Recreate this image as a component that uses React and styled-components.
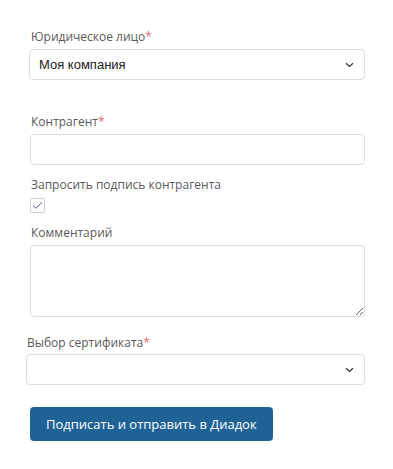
import React from 'react';
import styled, { createGlobalStyle } from 'styled-components';

const GlobalStyle = createGlobalStyle`
  html, body {
    margin: 0;
    padding: 0;
    background: #fff;
  }
  body {
    font-family: 'Open Sans', 'Liberation Sans', sans-serif;
  }
`;

const Form = styled.form`
  width: 393px;
  box-sizing: border-box;
  padding: 28px 28px 0 0;
  display: flex;
  flex-direction: column;
`;

const Field = styled.div`
  display: flex;
  flex-direction: column;
  padding-left: ${(p) => p.$inset || 30}px;
  margin-top: ${(p) => p.$top || 0}px;
`;

const Label = styled.label`
  font-size: 12px;
  line-height: 17px;
  color: #5a5a5a;
  margin-bottom: ${(p) => (p.$gap !== undefined ? p.$gap : 4)}px;
  padding-left: ${(p) => p.$shift || 1}px;

  em {
    font-style: normal;
    color: #e06767;
  }
`;

const Select = styled.div`
  height: 31px;
  box-sizing: border-box;
  border: 1px solid #dcdcdc;
  border-radius: 4px;
  background: #fff;
  display: flex;
  align-items: center;
  justify-content: space-between;
  padding: 0 10px 0 9px;
  font-family: 'Liberation Sans', Arial, sans-serif;
  font-size: 13px;
  color: #222;
`;

const Input = styled.input`
  height: 31px;
  box-sizing: border-box;
  border: 1px solid #dcdcdc;
  border-radius: 4px;
  outline: none;
  padding: 0 9px;
  font-family: 'Liberation Sans', Arial, sans-serif;
  font-size: 13px;
`;

const TextArea = styled.textarea`
  height: 72px;
  box-sizing: border-box;
  border: 1px solid #dcdcdc;
  border-radius: 4px;
  outline: none;
  padding: 6px 9px;
  font-family: 'Liberation Sans', Arial, sans-serif;
  font-size: 13px;
  resize: vertical;
`;

const Check = styled.span`
  width: 15px;
  height: 15px;
  box-sizing: border-box;
  border: 1px solid #cfcfcf;
  border-radius: 2px;
  display: flex;
  align-items: center;
  justify-content: center;
  background: #fff;
`;

const Button = styled.button`
  align-self: flex-start;
  margin: 22px 0 0 30px;
  height: 34px;
  padding: 0 16px;
  border: none;
  border-radius: 4px;
  background: #1f6396;
  color: #fff;
  font-family: 'Open Sans', 'Liberation Sans', sans-serif;
  font-size: 13px;
  cursor: pointer;
`;

const Chevron = () => (
  <svg width="9" height="6" viewBox="0 0 9 6">
    <path d="M1 1.3 L4.5 4.5 L8 1.3" fill="none" stroke="#333" strokeWidth="1.2" />
  </svg>
);

export default function App() {
  return (
    <>
      <GlobalStyle />
      <Form onSubmit={(e) => e.preventDefault()}>
        <Field $inset={29}>
          <Label $shift={2}>
            Юридическое лицо<em>*</em>
          </Label>
          <Select>
            <span>Моя компания</span>
            <Chevron />
          </Select>
        </Field>

        <Field $top={33}>
          <Label>
            Контрагент<em>*</em>
          </Label>
          <Input />
        </Field>

        <Field $top={11}>
          <Label $gap={5}>Запросить подпись контрагента</Label>
          <Check>
            <svg width="11" height="9" viewBox="0 0 11 9">
              <path d="M1 4.6 L3.8 7.3 L10 1.2" fill="none" stroke="#4a5a75" strokeWidth="1" />
            </svg>
          </Check>
        </Field>

        <Field $top={11}>
          <Label>Комментарий</Label>
          <TextArea />
        </Field>

        <Field $inset={26} $top={17}>
          <Label $gap={3}>
            Выбор сертификата<em>*</em>
          </Label>
          <Select>
            <span />
            <Chevron />
          </Select>
        </Field>

        <Button type="submit">Подписать и отправить в Диадок</Button>
      </Form>
    </>
  );
}
